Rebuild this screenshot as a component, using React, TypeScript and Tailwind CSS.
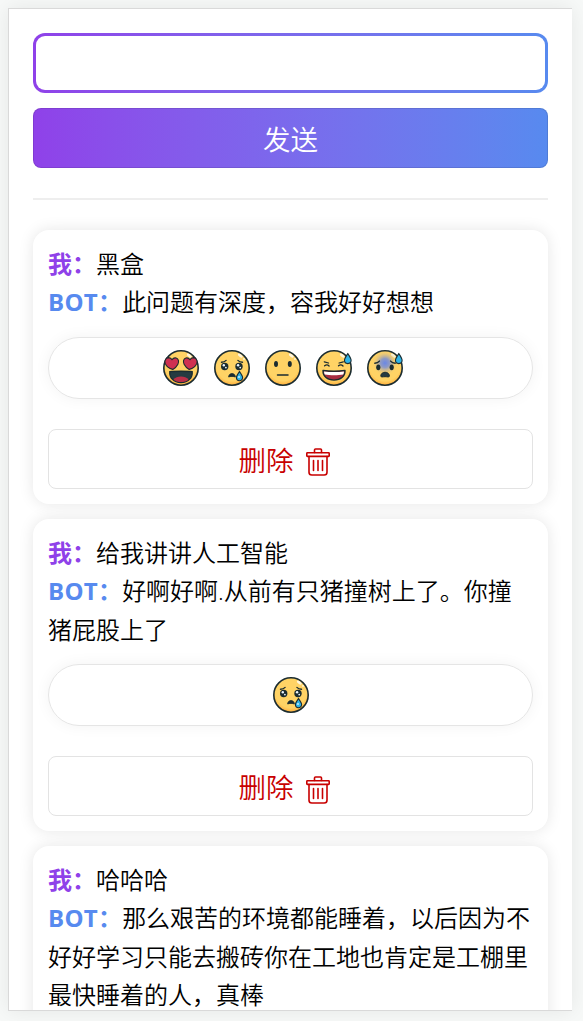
import type { ReactNode } from "react";

type Mood = "love" | "cry" | "neutral" | "laugh" | "anxious";

const INK = "#1b2c30";

function Drop() {
  return (
    <path d="M31.800 3.600c1.800 2.600 3.300 4.800 3.300 6.700a3.300 3.300 0 0 1-6.600 0c0-1.900 1.500-4.100 3.300-6.700z" fill="#2fb4e6" stroke={INK} strokeWidth="1.100" />
  );
}

const faces: Record<Mood, ReactNode> = {
  love: (
    <>
      <path d="M9.800 19.400C6.500 18.600 3.400 16.600 2.200 13.400C1.200 10.400 2.900 7.700 5.500 7.600c1.700 0 2.900.9 3.500 2.200 .9-1.400 2.400-2.300 4.100-1.800 2.500.8 3.100 3.600 1.800 6.200-1 2-3 4-5.100 5.200z" fill="#cf3151" stroke={INK} strokeWidth="1.100" strokeLinejoin="round" />
      <path d="M26.200 19.400C29.500 18.600 32.600 16.600 33.800 13.400C34.800 10.400 33.100 7.700 30.500 7.600c-1.700 0-2.900.9-3.500 2.200-.9-1.400-2.400-2.300-4.100-1.800-2.500.8-3.100 3.600-1.800 6.200 1 2 3 4 5.100 5.200z" fill="#cf3151" stroke={INK} strokeWidth="1.100" strokeLinejoin="round" />
      <path d="M6.800 21.700c4.500-.6 17.900-.6 22.400 0 .6 6-4 10.900-11.200 10.900S6.200 27.700 6.800 21.700z" fill="#263b41" stroke={INK} strokeWidth="1.300" />
      <path d="M10.500 29.700c3-4.300 12-4.300 15 0-4 3.100-11 3.100-15 0z" fill="#bb2f48" />
    </>
  ),
  cry: (
    <>
      <path d="M7.500 12.300q3-.1 4.600-1.900M28.500 12.300q-3-.1-4.600-1.900" fill="none" stroke={INK} strokeWidth="1.400" strokeLinecap="round" />
      <circle cx="10.700" cy="16.500" r="3.700" fill={INK} />
      <circle cx="25" cy="16.500" r="3.700" fill={INK} />
      <g fill="#edf6ff"><circle cx="9.800" cy="15.300" r="1.200" /><circle cx="11.900" cy="17.600" r=".9" /><circle cx="24.100" cy="15.300" r="1.200" /><circle cx="26.200" cy="17.600" r=".9" /></g>
      <path d="M14.600 27c.2-4.600 6.600-4.600 6.800 0-2-.8-4.800-.8-6.800 0z" fill={INK} stroke={INK} strokeWidth=".8" />
      <path d="M25.500 21.500c1.700 2.500 3.100 4.400 3.100 6.100a3.100 3.100 0 0 1-6.200 0c0-1.700 1.400-3.600 3.100-6.100z" fill="#2fb4e6" stroke={INK} strokeWidth="1.100" />
      <circle cx="25" cy="27" r=".9" fill="#d8f5ff" />
    </>
  ),
  neutral: (
    <>
      <ellipse cx="11" cy="14" rx="2" ry="3" fill={INK} />
      <ellipse cx="24.800" cy="14" rx="2" ry="3" fill={INK} />
      <path d="M12.500 25H23" stroke={INK} strokeWidth="1.500" strokeLinecap="round" />
    </>
  ),
  laugh: (
    <>
      <path d="M8.600 15.800q2.400-2 4.500.2M8.300 11.800l4.200 1.200M22.500 15.800q2.400-2 4.500.2M27.300 11.800l-4.200 1.200" fill="none" stroke={INK} strokeWidth="1.300" strokeLinecap="round" />
      <path d="M7 20.500c5.800.8 16.200.8 22 0 .2 5.800-4.400 9.600-11 9.600S6.800 26.300 7 20.500z" fill="#a72d42" stroke={INK} strokeWidth="1.400" strokeLinejoin="round" />
      <path d="M8 21.500c5.400.8 14.600.8 20 0-.1 1.400-.4 2.200-.8 3-5 1-13.400 1-18.400 0-.4-.8-.7-1.600-.8-3z" fill="#fff" />
      <Drop />
    </>
  ),
  anxious: (
    <>
      <circle cx="18" cy="13" r="13" fill="url(#blueBrow)" />
      <path d="M7.800 13.300q3-.2 4.600-2.200M28.200 13.300q-3-.2-4.600-2.200" fill="none" stroke={INK} strokeWidth="1.400" strokeLinecap="round" />
      <ellipse cx="11.300" cy="17.300" rx="2.100" ry="2.900" fill={INK} />
      <ellipse cx="24.700" cy="17.300" rx="2.100" ry="2.900" fill={INK} />
      <path d="M13.800 26c0-5 8.600-5 8.600 0 0 1.500-2 .7-4.300.7s-4.300.8-4.300-.7z" fill="#263b41" stroke={INK} />
      <Drop />
    </>
  ),
};

function Emoji({ mood }: { mood: Mood }) {
  return (
    <svg viewBox="0 0 36 36" className="size-9 shrink-0">
      <defs>
        <radialGradient id="skin" cx=".5" cy=".42" r=".58">
          <stop offset=".78" stopColor="#ffd365" />
          <stop offset="1" stopColor="#ffae3b" />
        </radialGradient>
        <radialGradient id="blueBrow">
          <stop offset="0" stopColor="#6a87e6" />
          <stop offset=".35" stopColor="#7b90d4" stopOpacity=".85" />
          <stop offset="1" stopColor="#ffd365" stopOpacity="0" />
        </radialGradient>
      </defs>
      <circle cx="18" cy="18" r="17.200" fill="url(#skin)" stroke={INK} strokeWidth="1.600" />
      <ellipse cx="26.300" cy="5.600" rx="2.800" ry="1.400" transform="rotate(33 26.300 5.600)" fill="#fff6df" />
      <circle cx="30" cy="9" r=".9" fill="#fff6df" />
      {faces[mood]}
    </svg>
  );
}

function TrashIcon() {
  return (
    <svg viewBox="0 0 26 30" className="mt-1 h-[30px] w-[26px]" fill="none" stroke="currentColor" strokeWidth="1.600" strokeLinejoin="round" strokeLinecap="round">
      <path d="M9.500 5.500V3q0-1 1-1h5q1 0 1 1v2.500" />
      <rect x="1.800" y="5.800" width="22.400" height="3.600" rx=".6" />
      <path d="M4 9.500v15.700q0 2.800 2.800 2.800h12.400q2.800 0 2.800-2.800V9.500M8.500 13.500v10M13 13.500v10M17.500 13.500v10" />
    </svg>
  );
}

interface Message {
  question: string;
  answer: string;
  moods: Mood[];
}

const messages: Message[] = [
  { question: "黑盒", answer: "此问题有深度，容我好好想想", moods: ["love", "cry", "neutral", "laugh", "anxious"] },
  { question: "给我讲讲人工智能", answer: "好啊好啊.从前有只猪撞树上了。你撞猪屁股上了", moods: ["cry"] },
  { question: "哈哈哈", answer: "那么艰苦的环境都能睡着，以后因为不好好学习只能去搬砖你在工地也肯定是工棚里最快睡着的人，真棒", moods: ["laugh"] },
];

function MessageCard({ question, answer, moods }: Message) {
  return (
    <article className="rounded-2xl bg-white p-[15px] shadow-[0_0_15px_rgba(0,0,0,0.1)]">
      <div className="text-2xl leading-[38.4px] font-[350] break-all">
        <p>
          <b className="font-['Noto_Sans_CJK_SC',sans-serif] leading-none font-bold text-[#8f41e9]">我：</b>
          {question}
        </p>
        <p>
          <b className="font-['Open_Sans','Noto_Sans_CJK_SC',sans-serif] leading-none font-bold tracking-[0.25px] text-[#578aef]">BOT：</b>
          {answer}
        </p>
      </div>
      <div className={`mt-[15px] flex h-[62px] items-center justify-center gap-[15px] rounded-full border border-[#e5e5e5] shadow-[0_0_15px_rgba(0,0,0,0.05)] ${moods.length > 1 ? "pr-[15px]" : ""}`}>
        {moods.map((mood) => (
          <Emoji key={mood} mood={mood} />
        ))}
      </div>
      <button className="mt-[30px] flex h-[60px] w-full items-center justify-center gap-[11px] rounded-lg border border-[#e3e3e3] pt-[3px] pr-[12px] text-[27.500px] font-[350] text-[#c80000]">
        删除
        <TrashIcon />
      </button>
    </article>
  );
}

export default function App() {
  return (
    <div className="h-[1021px] overflow-hidden bg-[#f7f9f8] py-2 pr-[11px] pl-2 font-['Open_Sans','Noto_Sans_CJK_SC_DemiLight','Noto_Sans_CJK_SC',sans-serif] text-black">
      <main className="h-[1003px] overflow-hidden border-y border-l border-[#d9d9d9] bg-white px-6 pt-6 shadow-[0_0_20px_rgba(0,0,0,0.08)]">
        <div className="rounded-xl bg-linear-to-r from-[#8f41e9] to-[#578aef] p-[3px]">
          <input className="block h-[54px] w-full rounded-[9px] bg-white px-4 text-2xl outline-none" />
        </div>
        <button className="mt-[15px] block h-[60px] w-full rounded-lg border border-black/10 bg-linear-to-r from-[#8f41e9] to-[#578aef] bg-origin-border pt-[3px] text-[27.500px] font-[350] text-white">
          发送
        </button>
        <hr className="mt-[30px] mb-[30px] h-[2px] border-0 bg-[#eeeeee]" />
        <section className="flex flex-col gap-[15px]">
          {messages.map((message) => (
            <MessageCard key={message.question} {...message} />
          ))}
        </section>
      </main>
    </div>
  );
}
